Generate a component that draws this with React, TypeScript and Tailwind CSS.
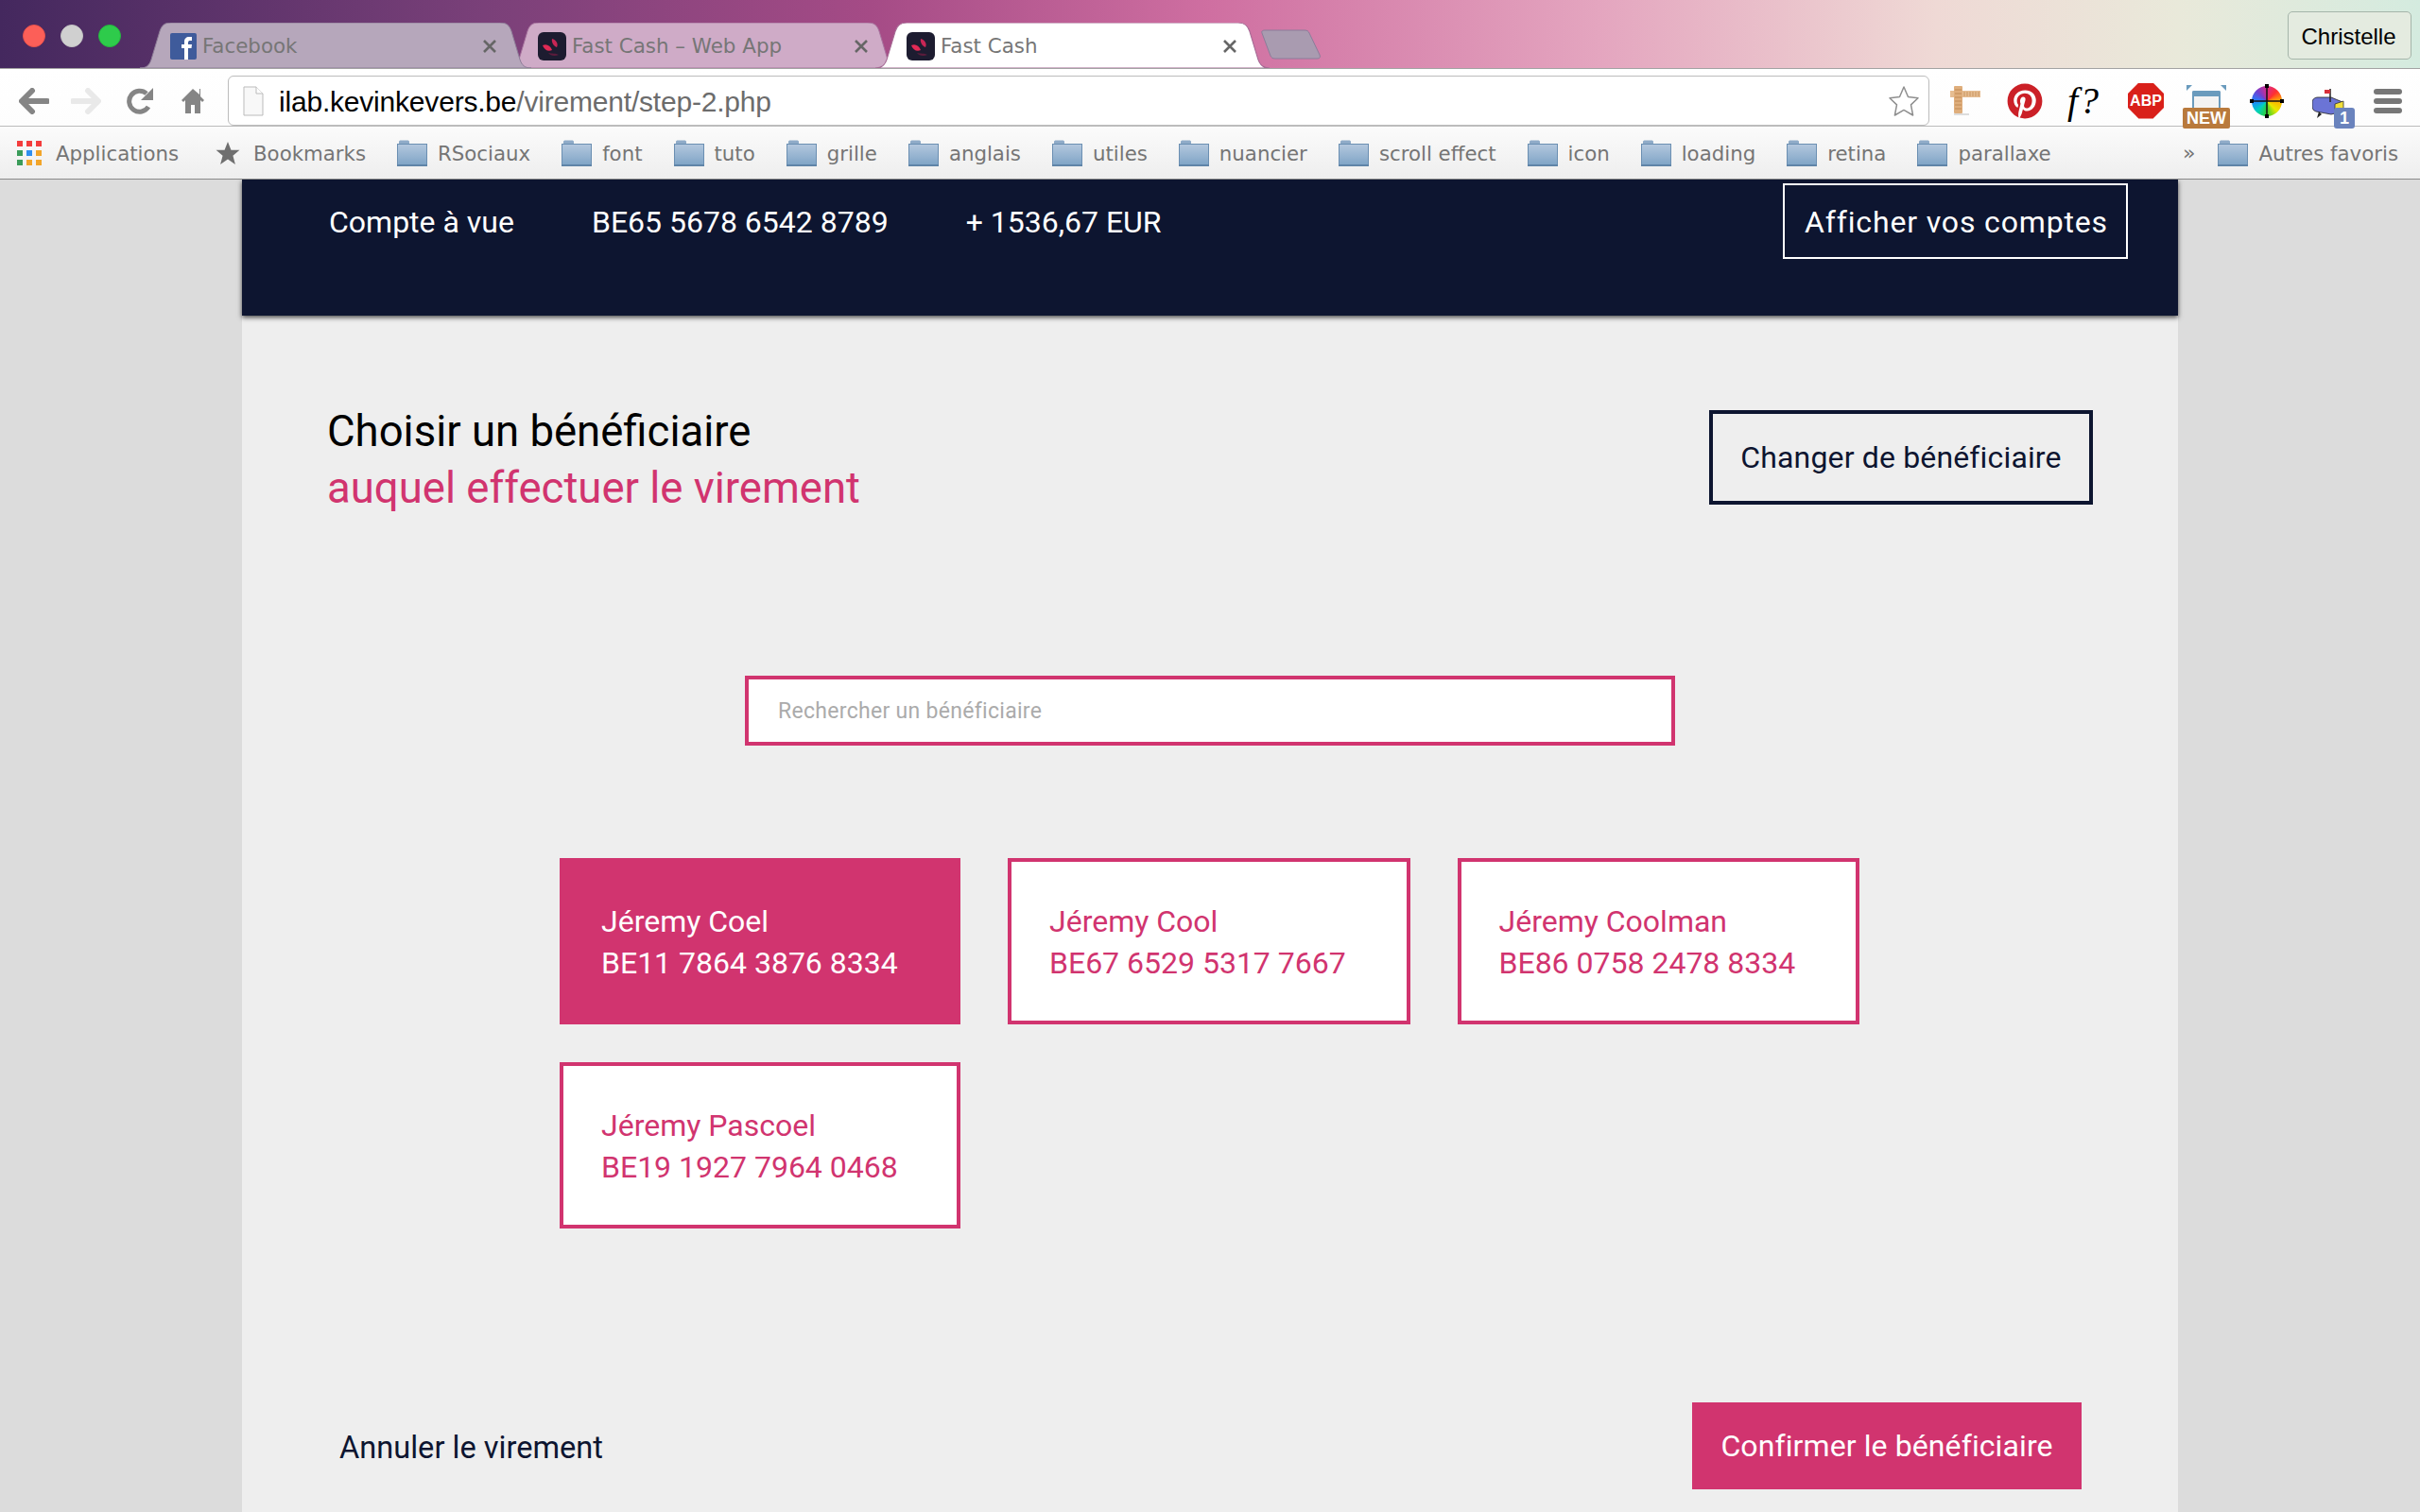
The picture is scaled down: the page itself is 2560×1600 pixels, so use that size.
import React from "react";
import { FaPinterest } from "react-icons/fa";

const TAB_PATH =
  "M0 48C7 48 10 45 12 39L21 9C23 3 26 0 33 0H381C388 0 391 3 393 9L402 39C404 45 407 48 414 48Z";

const bookmarks = [
  "RSociaux",
  "font",
  "tuto",
  "grille",
  "anglais",
  "utiles",
  "nuancier",
  "scroll effect",
  "icon",
  "loading",
  "retina",
  "parallaxe",
];

const beneficiaries = [
  { name: "Jéremy Coel", iban: "BE11 7864 3876 8334", selected: true },
  { name: "Jéremy Cool", iban: "BE67 6529 5317 7667", selected: false },
  { name: "Jéremy Coolman", iban: "BE86 0758 2478 8334", selected: false },
  { name: "Jéremy Pascoel", iban: "BE19 1927 7964 0468", selected: false },
];

const FolderIcon = () => (
  <svg width="32" height="28" viewBox="0 0 32 28" className="shrink-0">
    <defs>
      <linearGradient id="folder-fill" x1="0" y1="0" x2="0" y2="1">
        <stop offset="0" stopColor="#b4c8de" />
        <stop offset="1" stopColor="#7fa4c6" />
      </linearGradient>
    </defs>
    <path d="M2 4V2C2 1 3 .5 4 .5H11C12 .5 13 1 13 2V4Z" fill="#8fabc8" />
    <rect x=".5" y="4.5" width="31" height="22" fill="url(#folder-fill)" stroke="#6b8fb2" />
    <rect x="0" y="26" width="32" height="2" fill="#5f84a8" />
  </svg>
);

const CloseIcon = () => (
  <svg width="16" height="14" viewBox="0 0 16 14" className="shrink-0">
    <path d="M2 1L14 13M14 1L2 13" stroke="#666" strokeWidth="2.6" />
  </svg>
);

const FastCashFavicon = () => (
  <svg width="30" height="30" viewBox="0 0 30 30" className="shrink-0">
    <rect width="30" height="30" rx="6" fill="#1d1c30" />
    <path d="M5 14C9 12 13 14 15 19C11 21 7 19 5 14Z" fill="#e22a55" />
    <path d="M15 7C19 8 22 12 20 16C17 15 14 11 15 7Z" fill="#c92655" />
    <path d="M11 22C15 23 19 22 22 24C18 26 13 25 11 22Z" fill="#5b1c3c" />
  </svg>
);

interface TabProps {
  width: string;
  fill: string;
  stroke: string;
  z: string;
  icon: React.ReactNode;
  title: string;
  textWidth: string;
  pad: string;
}

const Tab: React.FC<TabProps> = ({ width, fill, stroke, z, icon, title, textWidth, pad }) => (
  <div className={`relative h-[48px] shrink-0 ${width} ${z} ${pad}`}>
    <svg
      viewBox="0 0 414 48"
      preserveAspectRatio="none"
      className="absolute inset-0 h-full w-full"
    >
      <path d={TAB_PATH} fill={fill} stroke={stroke} strokeWidth="1" />
    </svg>
    <div className="relative flex h-full items-center pt-[2px]">
      {icon}
      <span className={`ml-[6px] whitespace-nowrap font-['DejaVu_Sans',sans-serif] text-[21.400px] text-[#767676] ${textWidth}`}>
        {title}
      </span>
      <CloseIcon />
    </div>
  </div>
);

const BrowserChrome = () => (
  <div className="shrink-0 font-['Liberation_Sans',sans-serif]">
    <div className="relative flex h-[72px] items-end bg-[linear-gradient(90deg,#44285e_0%,#7a4079_20%,#a54b86_36%,#cf6fa1_50%,#e4a5bf_66%,#efd9d5_80%,#e9e9da_90%,#d4ebdf_100%)] pl-[148px]">
      <Tab
        width="w-[414px]"
        fill="#b6a7bb"
        stroke="#8e7d98"
        z="z-20"
        pad="pl-[32px] pr-[32px]"
        title="Facebook"
        textWidth="w-[296px]"
        icon={
          <svg width="28" height="28" viewBox="0 0 28 28" className="shrink-0">
            <rect width="28" height="28" rx="2" fill="#3f5b9b" />
            <path d="M15 28V16H12V12H15V9C15 6 17 4 20 4H23V8H21C20 8 19 8.500 19 10V12H23L22.500 16H19V28Z" fill="#fff" />
          </svg>
        }
      />
      <Tab
        width="w-[414px]"
        fill="#cfabc7"
        stroke="#a8749f"
        z="z-10"
        pad="pl-[32px] pr-[32px] -ml-[25px]"
        title="Fast Cash – Web App"
        textWidth="w-[299px]"
        icon={<FastCashFavicon />}
      />
      <Tab
        width="w-[417px]"
        fill="#ffffff"
        stroke="#a56a94"
        z="z-30"
        pad="pl-[33px] pr-[32px] -ml-[25px]"
        title="Fast Cash"
        textWidth="w-[298px]"
        icon={<FastCashFavicon />}
      />
      <svg width="64" height="32" viewBox="0 0 64 32" className="z-0 mb-[9px] -ml-[9px] shrink-0">
        <path d="M1 4C0 2 2 1 4 1H46C49 1 50 2 51 4L62 27C63 30 62 31 59 31H15C12 31 11 30 10 28Z" fill="#a99bb0" stroke="#8b7d9a" />
      </svg>
      <div className="absolute top-[26px] left-[24px] flex gap-[16px]">
        <span className="h-[24px] w-[24px] rounded-full border border-[#e8524c] bg-[#fc5f58]" />
        <span className="h-[24px] w-[24px] rounded-full border border-[#c4c4c4] bg-[#d0d0d0]" />
        <span className="h-[24px] w-[24px] rounded-full border border-[#25b83f] bg-[#2ecb4b]" />
      </div>
      <div className="absolute top-[12px] right-[9px] flex h-[51px] w-[131px] items-center justify-center rounded-[5px] border border-[#a5b5aa] bg-[#e4ebe0] pt-[2px] pr-[2px] text-[24px] text-black">
        Christelle
      </div>
    </div>

    <div className="relative z-50 flex h-[61px] items-center border-t border-[#a3a3a3] bg-[linear-gradient(180deg,#ffffff_0%,#fdfdfd_100%)] pt-[7px]">
      <svg width="32" height="28" viewBox="0 0 32 28" className="ml-[20px] shrink-0">
        <path d="M30 14H4M14 3L3 14L14 25" fill="none" stroke="#858585" strokeWidth="6" strokeLinecap="round" strokeLinejoin="round" />
      </svg>
      <svg width="32" height="28" viewBox="0 0 32 28" className="ml-[23px] shrink-0">
        <path d="M2 14H28M18 3L29 14L18 25" fill="none" stroke="#e9e9e9" strokeWidth="6" strokeLinecap="round" strokeLinejoin="round" />
      </svg>
      <svg width="28" height="28" viewBox="0 0 28 28" className="ml-[27px] shrink-0">
        <path d="M23 20A11 11 0 1 1 21 6" fill="none" stroke="#858585" strokeWidth="5" />
        <path d="M28 0V13H15Z" fill="#858585" />
      </svg>
      <svg width="26" height="28" viewBox="0 0 26 28" className="ml-[29px] shrink-0">
        <path d="M13 1L1 13L3 15L5 13V27H11V18H15V27H21V13L23 15L25 13L21 9V1H20V7Z" fill="#858585" />
      </svg>
      <div className="ml-[24px] flex h-[53px] w-[1800px] shrink-0 items-center rounded-[6px] border border-[#bcbcbc] bg-white pr-[8px] pl-[15px]">
        <svg width="22" height="32" viewBox="0 0 22 32" className="shrink-0">
          <path d="M1 1H14L21 8V31H1Z" fill="#f8f8f8" stroke="#bbb" />
          <path d="M14 1V8H21" fill="#fff" stroke="#bbb" />
        </svg>
        <span className="ml-[16px] flex-1 whitespace-nowrap pt-[2px] text-[30px] tracking-[-0.2px] text-black">
          ilab.kevinkevers.be<span className="text-[#6c6c6c]">/virement/step-2.php</span>
        </span>
        <svg width="36" height="36" viewBox="0 0 24 24" className="shrink-0">
          <path d="M12 2L15 9L22 9.800L17 14.600L18.400 22L12 18.300L5.600 22L7 14.600L2 9.800L9 9Z" fill="#fff" stroke="#8f8f8f" strokeWidth="1" strokeLinejoin="round" />
        </svg>
      </div>
      <svg width="32" height="32" viewBox="0 0 32 32" className="ml-[22px] shrink-0">
        <rect x="4" y="29" width="16" height="2" fill="#ddd" />
        <rect x="0" y="5" width="32" height="7" fill="#e6bd92" />
        <path d="M15 6V11M18 6V11M21 6V11M24 6V11M27 6V11M30 6V11" stroke="#c9955f" strokeWidth="1" />
        <rect x="4" y="0" width="9" height="29" rx="1" fill="#dfae7c" />
        <path d="M5 4H12M5 8H12M5 12H12M5 16H12M5 20H12M5 24H12" stroke="#c08a55" strokeWidth="1" />
      </svg>
      <FaPinterest className="ml-[28px] h-[38px] w-[38px] shrink-0 text-[#cb2027]" />
      <span className="ml-[26px] w-[38px] shrink-0 font-['Liberation_Serif',serif] text-[40px] leading-none tracking-[2px] whitespace-nowrap text-black italic">
        f?
      </span>
      <div className="ml-[26px] flex h-[38px] w-[38px] shrink-0 items-center justify-center bg-[#d9201a] text-[16px] font-bold text-white [clip-path:polygon(30%_0,70%_0,100%_30%,100%_70%,70%_100%,30%_100%,0_70%,0_30%)]">
        ABP
      </div>
      <div className="relative ml-[20px] -mb-[3px] h-[46px] w-[50px] shrink-0 self-end">
        <span className="absolute top-0 left-[4px] h-0 w-0 border-t-[6px] border-r-[6px] border-t-[#6a9bbd] border-r-transparent" />
        <span className="absolute top-0 right-[4px] h-0 w-0 border-t-[6px] border-l-[6px] border-t-[#6a9bbd] border-l-transparent" />
        <div className="mx-auto mt-[6px] h-[24px] w-[30px] rounded-t-[2px] border-x-2 border-t-[6px] border-[#6a9bbd] bg-[#f3f3f3]" />
        <div className="absolute right-0 bottom-0 left-0 flex h-[22px] items-center justify-center rounded-[2px] bg-[#b97a3c] text-[18px] font-bold text-white">
          NEW
        </div>
      </div>
      <div className="relative ml-[23px] h-[32px] w-[32px] shrink-0 rounded-full bg-[conic-gradient(#d92b8c,#ff3030,#ffb000,#e8e800,#30d030,#00d0c0,#2080ff,#7040d0,#d92b8c)]">
        <svg width="36" height="36" viewBox="0 0 36 36" className="absolute -top-[2px] -left-[2px]">
          <path d="M18 2V34M2 18H34" stroke="#111" strokeWidth="1.500" />
          <rect x="0" y="16" width="4" height="4" />
          <rect x="32" y="16" width="4" height="4" />
          <rect x="16" y="0" width="4" height="4" />
          <rect x="16" y="32" width="4" height="4" />
        </svg>
      </div>
      <div className="relative ml-[32px] -mb-[3px] h-[42px] w-[45px] shrink-0 self-end">
        <svg width="34" height="32" viewBox="0 0 34 32" className="absolute top-0 left-0">
          <path d="M6 9H20L32 14V24L20 27L4 24C1 23 0 21 0 18V14C0 11 3 9 6 9Z" fill="#6b74d6" stroke="#222" strokeWidth=".8" />
          <path d="M19 0V14" stroke="#222" strokeWidth="1.500" />
          <rect x="13" y="1" width="6" height="4" fill="#d8303a" />
          <path d="M24 16L33 13L33 26L24 26Z" fill="#f1df3a" stroke="#333" strokeWidth=".8" />
          <path d="M7 24L5 31L10 27Z" fill="#222" />
        </svg>
        <div className="absolute right-0 bottom-0 flex h-[22px] w-[22px] items-center justify-center rounded-[3px] bg-[#6a83bd] text-[18px] font-bold text-white">
          1
        </div>
      </div>
      <div className="ml-[20px] flex w-[30px] shrink-0 flex-col gap-[4px]">
        <span className="h-[6px] rounded-full bg-[#777]" />
        <span className="h-[6px] rounded-full bg-[#777]" />
        <span className="h-[6px] rounded-full bg-[#777]" />
      </div>
    </div>

    <div className="relative z-40 flex h-[57px] items-center border-t border-b border-t-[#bcbcbc] border-b-[#8a8a8a] bg-[linear-gradient(180deg,#fbfbfb_0%,#eeeeee_100%)] pl-[18px] font-['DejaVu_Sans',sans-serif] text-[21.300px] whitespace-nowrap text-[#757575]">
      <div className="grid h-[26px] w-[26px] shrink-0 grid-cols-3 gap-[4px]">
        {["#f33c3c", "#f33c3c", "#f33c3c", "#3b9c5a", "#2f8ff0", "#f2a52a", "#3b9c5a", "#f2a52a", "#f2a52a"].map((c, i) => (
          <span key={i} className="h-[6px] w-[6px]" style={{ backgroundColor: c }} />
        ))}
      </div>
      <span className="ml-[15px] w-[132px] shrink-0 pt-[2px]">Applications</span>
      <svg width="26" height="26" viewBox="0 0 24 24" className="ml-[37px] shrink-0">
        <path d="M12 1L15.200 9H23.500L17 14.500L19.300 23L12 18L4.700 23L7 14.500L.500 9H8.800Z" fill="#6f6f6f" />
      </svg>
      <span className="ml-[14px] w-[119px] shrink-0 pt-[2px]">Bookmarks</span>
      <div className="ml-[33px] flex gap-[33px]">
        {bookmarks.map((b) => (
          <div key={b} className="flex items-center gap-[11px]">
            <FolderIcon />
            <span className="pt-[2px]">{b}</span>
          </div>
        ))}
      </div>
      <span className="ml-auto text-[22px]">»</span>
      <div className="mr-[23px] ml-[24px] flex items-center gap-[11px]">
        <FolderIcon />
        <span className="pt-[2px]">Autres favoris</span>
      </div>
    </div>
  </div>
);

export default function App() {
  return (
    <div className="flex h-[1600px] w-[2560px] flex-col overflow-hidden bg-[#dcdcdc] font-['Roboto',sans-serif]">
      <BrowserChrome />
      <div className="mx-auto w-[2048px] flex-1 bg-[#eeeeee]">
        <div className="relative z-10 flex h-[144px] items-start bg-[#0d1530] pt-[4px] pr-[53px] pl-[92px] text-[32px] text-white shadow-[0_2px_5px_rgba(0,0,0,0.7)]">
          <div className="flex h-[80px] items-center gap-[82px] pt-[2px]">
            <span>Compte à vue</span>
            <span>BE65 5678 6542 8789</span>
            <span>+ 1536,67 EUR</span>
          </div>
          <button className="ml-auto flex h-[80px] w-[365px] items-center justify-center border-2 border-white pt-[2px] pl-[2px] tracking-[0.85px]">
            Afficher vos comptes
          </button>
        </div>

        <div className="flex h-[200px] items-start justify-between pt-[100px] pr-[90px] pl-[90px]">
          <h1 className="-mt-[7px] text-[45.500px] leading-[60px] font-normal text-black">
            Choisir un bénéficiaire
            <br />
            <span className="text-[#d1346f]">auquel effectuer le virement</span>
          </h1>
          <button className="h-[100px] w-[406px] border-4 border-[#0d1530] text-[32px] tracking-[0.15px] text-[#0d1530]">
            Changer de bénéficiaire
          </button>
        </div>

        <div className="mx-auto mt-[181px] w-[984px]">
          <input
            readOnly
            placeholder="Rechercher un bénéficiaire"
            className="h-[74px] w-full border-4 border-[#d1346f] bg-white pl-[31px] text-[23px] tracking-[0.3px] outline-none placeholder:text-[#ababab]"
          />
        </div>

        <div className="mt-[119px] ml-[336px] grid grid-cols-[424px_425.500px_425.500px] gap-x-[50px] gap-y-[40px]">
          {beneficiaries.map((b) => (
            <div
              key={b.iban}
              className={`flex h-[176px] flex-col justify-center border-4 border-[#d1346f] pt-[2px] pl-[40px] text-[32px] leading-[44px] ${
                b.selected ? "bg-[#d1346f] text-white" : "bg-white text-[#d1346f]"
              }`}
            >
              <span>{b.name}</span>
              <span>{b.iban}</span>
            </div>
          ))}
        </div>

        <div className="mt-[184px] flex items-center justify-between pr-[102px] pl-[103px]">
          <a className="pt-[4px] text-[32.600px] text-[#0d1530]">Annuler le virement</a>
          <button className="h-[92px] w-[412px] bg-[#d1346f] text-[32px] tracking-[0.1px] text-white">
            Confirmer le bénéficiaire
          </button>
        </div>
      </div>
    </div>
  );
}
